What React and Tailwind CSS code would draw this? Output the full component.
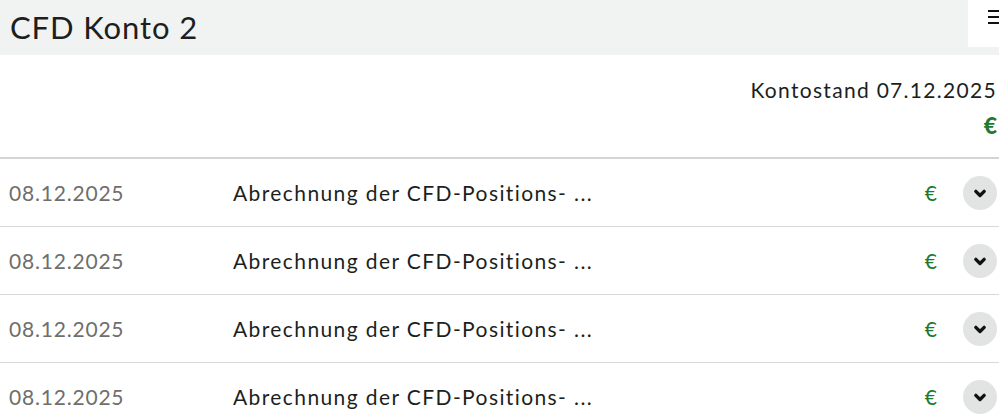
import React from 'react';

const rows = [
  { date: '08.12.2025', text: 'Abrechnung der CFD-Positions- ...' },
  { date: '08.12.2025', text: 'Abrechnung der CFD-Positions- ...' },
  { date: '08.12.2025', text: 'Abrechnung der CFD-Positions- ...' },
  { date: '08.12.2025', text: 'Abrechnung der CFD-Positions- ...' },
];

const Chevron = () => (
  <svg width="20" height="20" viewBox="0 0 24 24" fill="none" stroke="#111" strokeWidth="4" strokeLinecap="round" strokeLinejoin="round">
    <path d="M7 10l5 5 5-5" />
  </svg>
);

export default function App() {
  return (
    <div className="w-[999px] h-[418px] overflow-hidden bg-white text-[#1c1f1e]" style={{ fontFamily: 'Lato, "Open Sans", sans-serif' }}>
      {/* Header */}
      <div className="h-[55px] bg-[#f1f3f2] flex items-start justify-between">
        <h1 className="pl-[10px] pt-[8px] text-[31px] leading-[38px] font-normal tracking-[0.9px]">CFD Konto 2</h1>
        <div className="w-[31px] h-[47px] bg-white flex items-start pt-[10px] pl-[20px]">
          <div className="flex flex-col gap-[4px]">
            <span className="block w-[12px] h-[2px] bg-[#111]" />
            <span className="block w-[12px] h-[2px] bg-[#111]" />
            <span className="block w-[12px] h-[2px] bg-[#111]" />
          </div>
        </div>
      </div>

      {/* Balance */}
      <div className="h-[104px] border-b-2 border-[#d4d4d4] flex flex-col items-end pr-[2px] pt-[21px]">
        <div className="text-[21px] leading-[28px] tracking-[1.3px]">Kontostand 07.12.2025</div>
        <div className="text-[23px] leading-[28px] font-black text-[#1e7a2c] mt-[7px]">€</div>
      </div>

      {/* Rows */}
      {rows.map((r, i) => (
        <div key={i} className="h-[68px] border-b border-[#d9d9d9] flex items-center">
          <div className="w-[233px] pl-[9px] text-[21px] text-[#6d6f6e] tracking-[0.8px]">{r.date}</div>
          <div className="flex-1 text-[21px] tracking-[1.4px]">{r.text}</div>
          <div className="text-[21px] text-[#1e7a2c] mr-[26px]">€</div>
          <div className="w-[34px] h-[34px] rounded-full bg-[#e2e3e3] flex items-center justify-center mr-[2px]">
            <Chevron />
          </div>
        </div>
      ))}
    </div>
  );
}
